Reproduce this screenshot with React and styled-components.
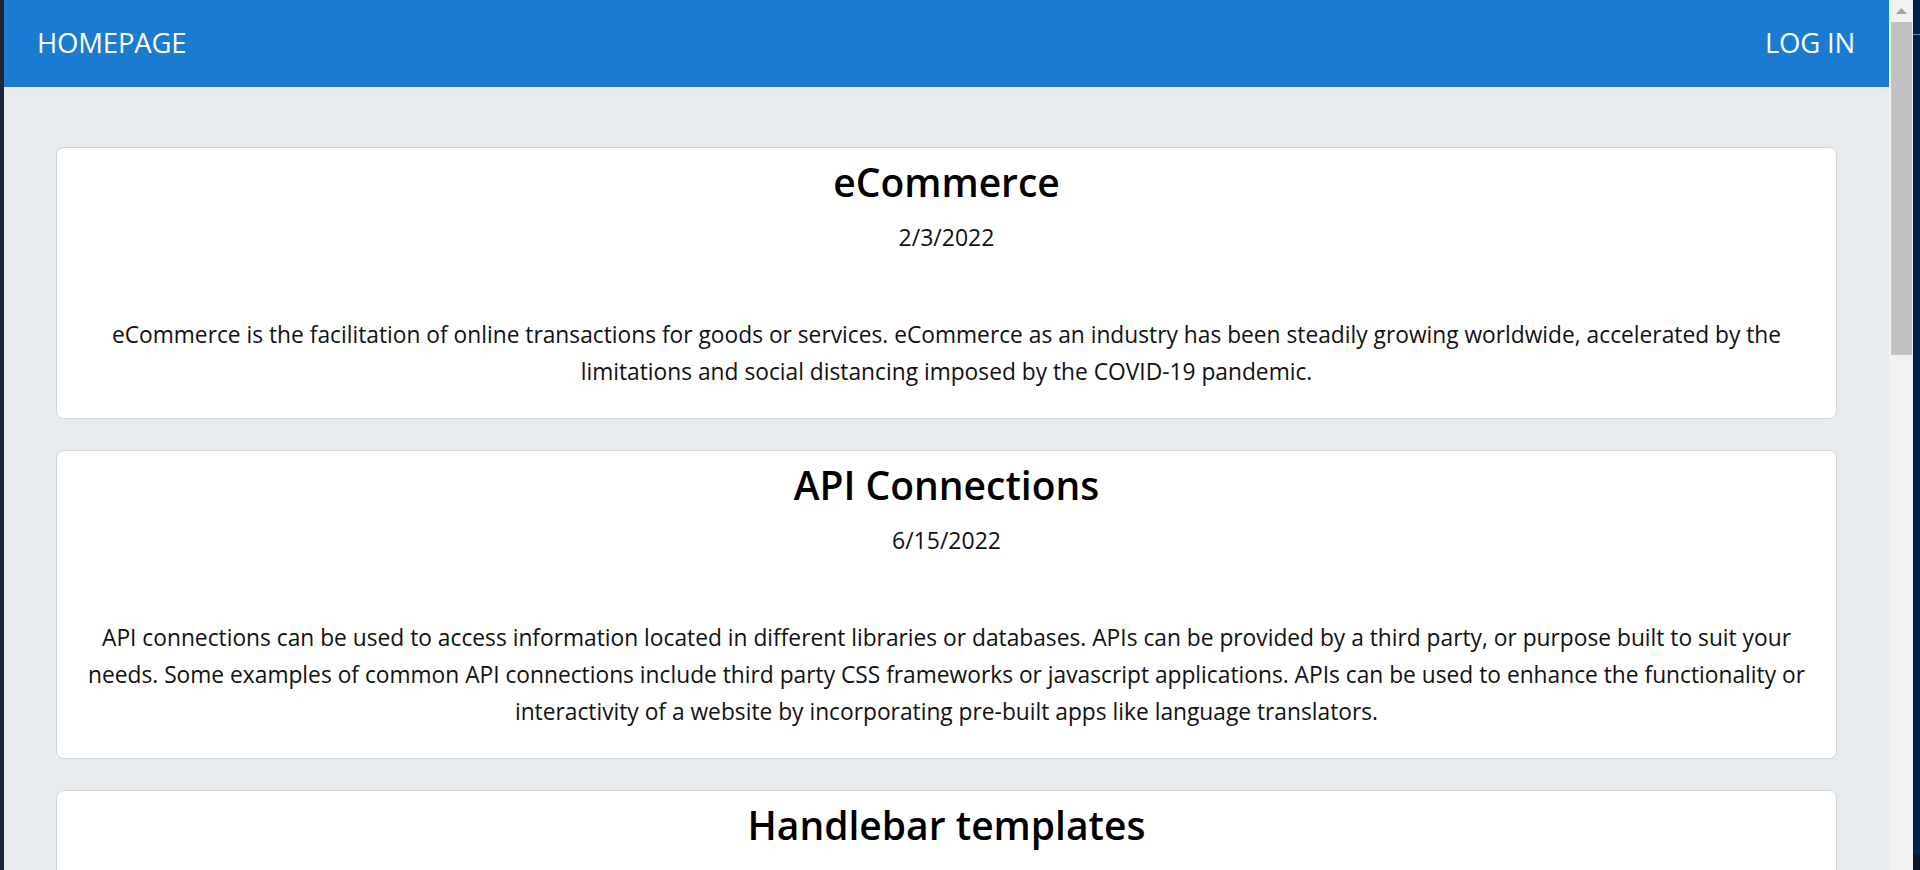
import React from "react";
import styled, { createGlobalStyle } from "styled-components";

const GlobalStyle = createGlobalStyle`
  html, body { margin: 0; padding: 0; height: 100%; overflow: hidden; }
  body { font-family: "Open Sans", "Noto Sans", "Liberation Sans", sans-serif; background: #e8ebee; }
  #root { height: 100%; }
`;

const Frame = styled.div`
  display: flex;
  height: 870px;
  width: 1920px;
  overflow: hidden;
`;

const DesktopEdge = styled.div`
  flex: 0 0 ${(p) => p.$w}px;
  background: ${(p) => p.$bg};
  display: flex;
  flex-direction: column;
`;

const EdgeLine = styled.div`
  height: 1px;
  margin-top: 34px;
  background: #7b8796;
`;

const EdgeFill = styled.div`
  flex: 1;
`;

const EdgeFoot = styled.div`
  height: 15px;
  background: #0a1526;
`;

const Viewport = styled.div`
  flex: 1;
  min-width: 0;
  display: flex;
  flex-direction: column;
  background: #e8ebee;
  overflow: hidden;
`;

const Header = styled.header`
  flex: 0 0 87px;
  display: flex;
  align-items: center;
  justify-content: space-between;
  padding: 0 34px 0 33px;
  background: #1a7bd0;
  color: #fff;
`;

const NavLink = styled.a`
  font-size: 27.5px;
  font-weight: 400;
  color: #fff;
  text-decoration: none;
  letter-spacing: -0.2px;
  padding-bottom: 2px;
`;

const Main = styled.main`
  display: flex;
  flex-direction: column;
  gap: 31px;
  padding: 60px 52px 0;
`;

const Card = styled.article`
  background: #fff;
  border: 1px solid #d3d6d9;
  border-radius: 8px;
  padding: 11px 20px 28px;
  text-align: center;
  color: #111;
`;

const Title = styled.h2`
  margin: 0;
  font-size: 39px;
  line-height: 46px;
  font-weight: 600;
  color: #000;
`;

const DateLine = styled.div`
  margin-top: 14px;
  font-size: 23px;
  line-height: 36px;
`;

const Body = styled.p`
  margin: 61px 0 0;
  font-size: 22.75px;
  line-height: 37px;
`;

const Scrollbar = styled.div`
  flex: 0 0 24px;
  background: #f1f1f1;
  display: flex;
  flex-direction: column;
  align-items: stretch;
`;

const ArrowButton = styled.div`
  height: 22px;
  display: flex;
  align-items: center;
  justify-content: center;
`;

const Thumb = styled.div`
  height: 333px;
  margin: 0 1px 0 2px;
  background: #c1c1c1;
`;

const posts = [
  {
    title: "eCommerce",
    date: "2/3/2022",
    body: "eCommerce is the facilitation of online transactions for goods or services. eCommerce as an industry has been steadily growing worldwide, accelerated by the limitations and social distancing imposed by the COVID-19 pandemic.",
  },
  {
    title: "API Connections",
    date: "6/15/2022",
    body: "API connections can be used to access information located in different libraries or databases. APIs can be provided by a third party, or purpose built to suit your needs. Some examples of common API connections include third party CSS frameworks or javascript applications. APIs can be used to enhance the functionality or interactivity of a website by incorporating pre-built apps like language translators.",
  },
  {
    title: "Handlebar templates",
    date: "6/20/2022",
    body: "Handlebar templates let you build semantic templates that render dynamic content on the server.",
  },
];

export default function App() {
  return (
    <>
      <GlobalStyle />
      <Frame>
        <DesktopEdge $w={4} $bg="#1b2538" />
        <Viewport>
          <Header>
            <NavLink href="#">HOMEPAGE</NavLink>
            <NavLink href="#">LOG IN</NavLink>
          </Header>
          <Main>
            {posts.map((p) => (
              <Card key={p.title}>
                <Title>{p.title}</Title>
                <DateLine>{p.date}</DateLine>
                <Body>{p.body}</Body>
              </Card>
            ))}
          </Main>
        </Viewport>
        <Scrollbar>
          <ArrowButton>
            <svg width="11" height="6" viewBox="0 0 11 6">
              <path d="M5.5 0 L11 6 L0 6 Z" fill="#a3a3a3" />
            </svg>
          </ArrowButton>
          <Thumb />
        </Scrollbar>
        <DesktopEdge $w={7} $bg="#00204a">
          <EdgeLine />
          <EdgeFill />
          <EdgeFoot />
        </DesktopEdge>
      </Frame>
    </>
  );
}
